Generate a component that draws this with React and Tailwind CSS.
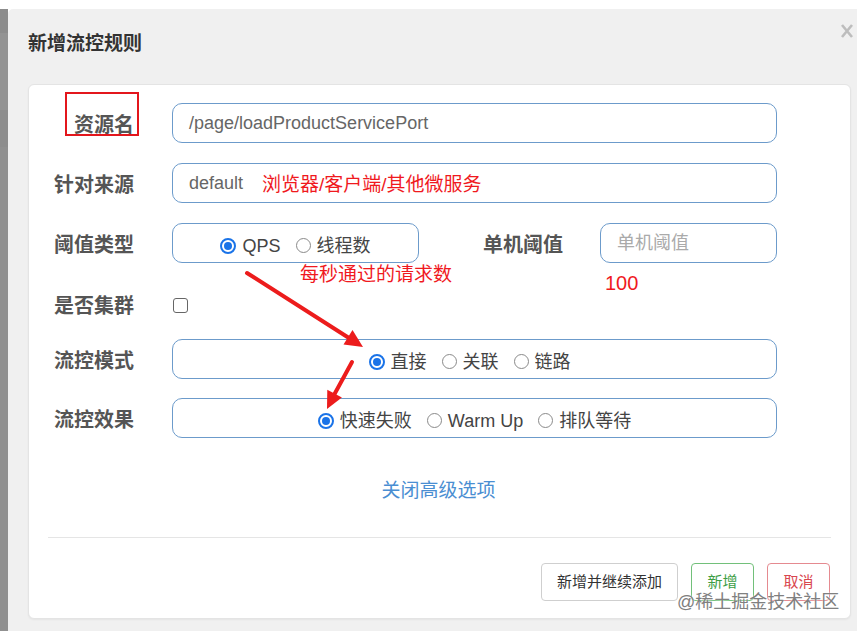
import React from "react";

const Label = ({ children, className = "" }) => (
  <div
    className={`w-[105px] shrink-0 pt-[4px] text-right text-[20px] font-bold leading-none text-[#555] ${className}`}
  >
    {children}
  </div>
);

const Radio = ({ checked, children }) => (
  <label className="flex items-center">
    {checked ? (
      <span className="flex h-[16px] w-[16px] items-center justify-center rounded-full border-2 border-[#1a73e8] bg-white">
        <span className="h-[8px] w-[8px] rounded-full bg-[#1a73e8]" />
      </span>
    ) : (
      <span className="h-[15px] w-[15px] rounded-full border border-[#8a8a8a] bg-white" />
    )}
    <span className="ml-[6px] text-[18px] leading-none text-[#444]">{children}</span>
  </label>
);

const RadioGroup = ({ items, checkedIndex, className = "" }) => (
  <div
    className={`flex h-[40px] items-center justify-center gap-[15px] rounded-[10px] border border-[#6c9bcb] bg-white pt-[5px] ${className}`}
  >
    {items.map((t, i) => (
      <Radio key={t} checked={i === checkedIndex}>
        {t}
      </Radio>
    ))}
  </div>
);

const TextBox = ({ children, className = "" }) => (
  <div
    className={`flex h-[40px] items-center rounded-[10px] border border-[#6c9bcb] bg-white px-4 text-[18px] leading-none ${className}`}
  >
    {children}
  </div>
);

export default function App() {
  return (
    <div className="relative h-[631px] w-[857px] overflow-hidden bg-white font-['Liberation_Sans','Noto_Sans_CJK_SC',sans-serif]">
      <div className="mt-[9px] flex h-[622px]">
        {/* backdrop strip of the page beneath */}
        <div className="flex w-[8px] shrink-0 flex-col bg-[#8f8f8f]">
          <div className="h-[24px] bg-[#8c8c8c]" />
          <div className="h-[77px] bg-[#939393]" />
          <div className="h-[37px] bg-[#8d8d8d]" />
          <div className="flex-1 bg-[#909090]" />
        </div>

        {/* dialog */}
        <div className="flex flex-1 flex-col rounded-tl-[5px] bg-[#f0f0f0] pl-[20px] pr-[6px]">
          <div className="flex items-start justify-between pt-[22px]">
            <h2 className="text-[19px] font-bold leading-[26px] text-[#333]">新增流控规则</h2>
            <svg width="14" height="16" viewBox="0 0 14 16" className="mr-[-3px] mt-[-8px]">
              <path d="M2 2 L12 14 M12 2 L2 14" stroke="#bdbdbd" strokeWidth="2.6" />
            </svg>
          </div>

          <div className="mt-[27px] flex flex-col rounded-[6px] border border-[#e4e4e4] bg-white pb-[17px] pt-[18px] shadow-[0_1px_2px_rgba(0,0,0,0.05)]">
            {/* 资源名 */}
            <div className="flex h-[40px] items-center">
              <Label>资源名</Label>
              <TextBox className="ml-[38px] w-[605px] text-[#666]">/page/loadProductServicePort</TextBox>
            </div>

            {/* 针对来源 */}
            <div className="mt-[20px] flex h-[40px] items-center">
              <Label>针对来源</Label>
              <TextBox className="ml-[38px] w-[605px] text-[#666]">
                <span>default</span>
                <span className="ml-[19px] pt-[3px] text-[19px] text-[#f0191e]">浏览器/客户端/其他微服务</span>
              </TextBox>
            </div>

            {/* 阈值类型 / 单机阈值 */}
            <div className="mt-[20px] flex h-[40px] items-center">
              <Label>阈值类型</Label>
              <RadioGroup className="ml-[38px] w-[247px]" items={["QPS", "线程数"]} checkedIndex={0} />
              <div className="w-[144px] pt-[4px] text-right text-[20px] font-bold leading-none text-[#555]">单机阈值</div>
              <TextBox className="ml-[37px] w-[177px] text-[#aaa]">单机阈值</TextBox>
            </div>

            {/* 是否集群 */}
            <div className="mt-[21px] flex h-[40px] items-center">
              <Label>是否集群</Label>
              <span className="ml-[39px] mt-[2px] h-[15px] w-[15px] rounded-[3px] border border-[#666] bg-white" />
            </div>

            {/* 流控模式 */}
            <div className="mt-[15px] flex h-[40px] items-center">
              <Label>流控模式</Label>
              <RadioGroup
                className="ml-[38px] w-[605px] pr-[10px]"
                items={["直接", "关联", "链路"]}
                checkedIndex={0}
              />
            </div>

            {/* 流控效果 */}
            <div className="mt-[19px] flex h-[40px] items-center">
              <Label>流控效果</Label>
              <RadioGroup
                className="ml-[38px] w-[605px]"
                items={["快速失败", "Warm Up", "排队等待"]}
                checkedIndex={0}
              />
            </div>

            <div className="mt-[38px] flex h-[28px] items-center justify-center">
              <span className="ml-[-2px] text-[19px] leading-none text-[#4a8ed2]">关闭高级选项</span>
            </div>

            <div className="mx-[19px] mt-[33px] border-t border-[#e5e5e5]" />

            <div className="mr-[20px] mt-[25px] flex justify-end gap-[13px]">
              <button className="h-[38px] w-[137px] rounded-[4px] border border-[#cfcfcf] bg-white text-[15px] text-[#333]">
                新增并继续添加
              </button>
              <button className="h-[38px] w-[63px] rounded-[4px] border border-[#72c07a] bg-white text-[15px] text-[#3d9e45]">
                新增
              </button>
              <button className="h-[38px] w-[63px] rounded-[4px] border border-[#e58a90] bg-white text-[15px] text-[#d9474f]">
                取消
              </button>
            </div>
          </div>
        </div>
      </div>

      {/* annotations drawn over the form */}
      <div className="pointer-events-none absolute left-[65px] top-[92px] h-[44px] w-[74px] border-2 border-[#e3161c]" />
      <div className="pointer-events-none absolute left-[300px] top-[265px] text-[19px] leading-none text-[#f0191e]">
        每秒通过的请求数
      </div>
      <div className="pointer-events-none absolute left-[605px] top-[273px] text-[20px] leading-none text-[#f0191e]">
        100
      </div>
      <svg className="pointer-events-none absolute left-0 top-0" width="857" height="631">
        <line x1="247" y1="273" x2="349" y2="338" stroke="#ec1c1c" strokeWidth="4" strokeLinecap="round" />
        <polygon points="363,347 343.5,344.5 352.5,330" fill="#ec1c1c" />
        <line x1="352" y1="362" x2="334" y2="395" stroke="#ec1c1c" strokeWidth="4" strokeLinecap="round" />
        <polygon points="327,409 327.3,389.8 341.9,397.6" fill="#ec1c1c" />
      </svg>
      <div className="pointer-events-none absolute left-[677px] top-[593px] text-[18px] leading-none text-[#808080] [text-shadow:0_0_2px_#fff]">
        @稀土掘金技术社区
      </div>
    </div>
  );
}
